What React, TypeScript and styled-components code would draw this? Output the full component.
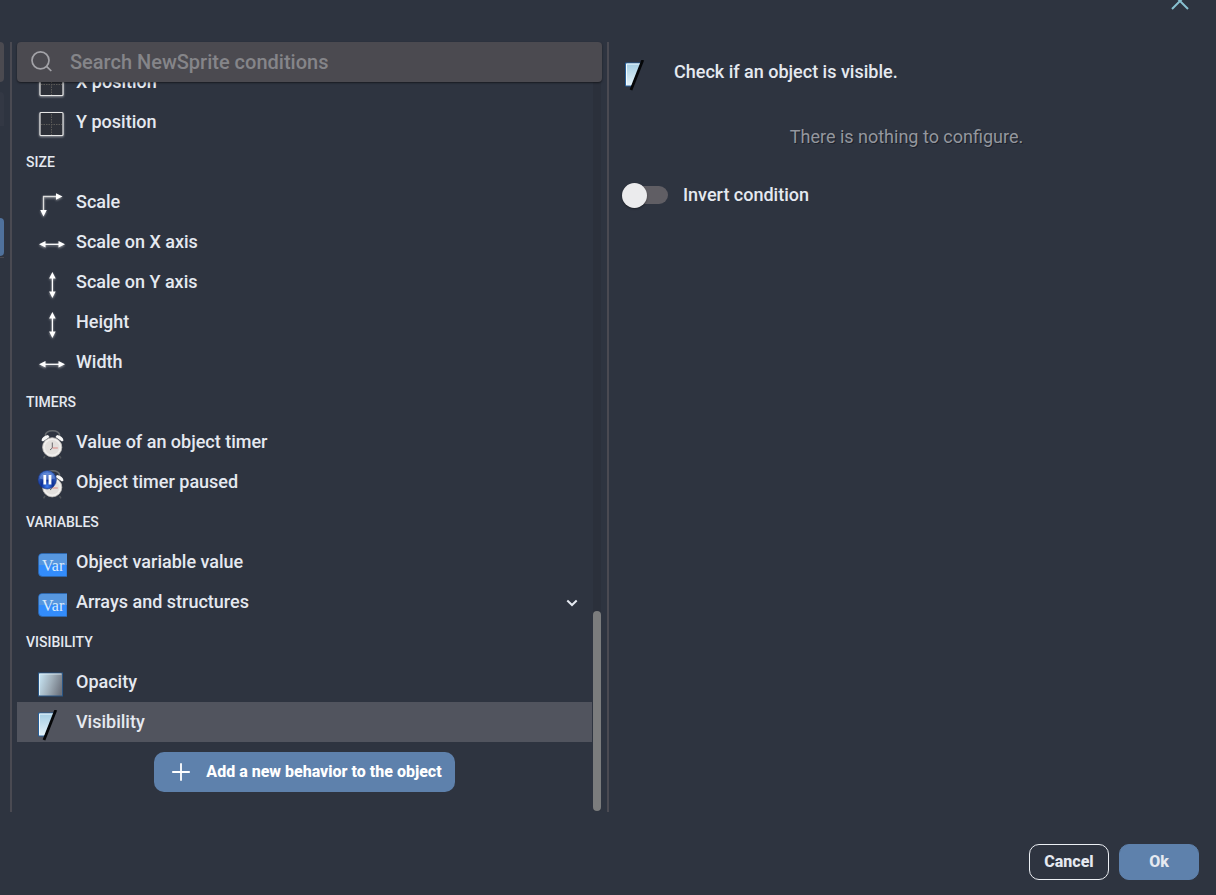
import React, { useState } from 'react';
import styled, { createGlobalStyle } from 'styled-components';

const colors = {
  background: '#2e3440',
  field: '#4b4a50',
  divider: '#4a4a52',
  selected: '#51545e',
  primary: '#5e81ac',
  text: '#e5e9f0',
  muted: '#94979e',
};

const GlobalStyle = createGlobalStyle`
  *, *::before, *::after { box-sizing: border-box; }
  body {
    margin: 0;
    background: ${colors.background};
    color: ${colors.text};
    font-family: Roboto, "Noto Sans", sans-serif;
    font-size: 18px;
    font-weight: 500;
    line-height: 24px;
  }
  button, input { font: inherit; color: inherit; }
  button { cursor: pointer; }
`;

const Dialog = styled.div`
  display: flex;
  flex-direction: column;
  height: 100vh;
  overflow: hidden;
`;

const Header = styled.header`
  display: flex;
  justify-content: flex-end;
  align-items: flex-start;
  flex: none;
  height: 42px;
  padding: 0 24px;
`;

const CloseButton = styled.button`
  display: flex;
  padding: 0;
  border: 0;
  background: none;
  color: #88c0d0;
`;

const Columns = styled.main`
  display: grid;
  grid-template-columns: 10px calc(50% - 11px) 1fr;
  flex: 1;
  min-height: 0;
`;

const ObjectColumn = styled.div`
  display: flex;
  flex-direction: column;
  width: 4px;
`;

const ObjectSearch = styled.div`
  height: 40px;
  border-radius: 0 4px 4px 0;
  background: ${colors.field};
`;

const ObjectGroup = styled.div`
  height: 34px;
  margin: 10px 0 92px;
  border-radius: 0 4px 0 0;
  background: #333844;
`;

const ObjectSelected = styled.div`
  height: 38px;
  border-radius: 0 8px 8px 0;
  background: #4f719c;
`;

const ObjectLine = styled.div`
  height: 2px;
  border-bottom: 1px solid ${colors.divider};
`;

const ListColumn = styled.section`
  display: flex;
  flex-direction: column;
  min-height: 0;
  padding: 0 5px;
  border-left: 2px solid ${colors.divider};
`;

const SearchBar = styled.label`
  display: flex;
  align-items: center;
  gap: 16px;
  flex: none;
  height: 40px;
  padding: 0 12px;
  border-radius: 4px;
  background: ${colors.field};
  box-shadow: 0 1px 2px rgba(0, 0, 0, 0.5);
  color: #a3a3a8;
  z-index: 1;
`;

const SearchInput = styled.input`
  flex: 1;
  min-width: 0;
  padding: 0;
  border: 0;
  outline: 0;
  background: none;
  color: ${colors.text};
  font-size: 20px;
  &::placeholder { color: #858589; opacity: 1; }
`;

const ScrollArea = styled.div`
  display: grid;
  grid-template-columns: 1fr 8px;
  gap: 1px;
  flex: 1;
  min-height: 0;
  padding: 0 1px 1px 0;
`;

const List = styled.div`
  display: flex;
  flex-direction: column;
  justify-content: flex-end;
  overflow: hidden;
  min-height: 0;
`;

const ScrollTrack = styled.div`
  display: flex;
  flex-direction: column;
  justify-content: flex-end;
  background: #2b303b;
`;

const ScrollThumb = styled.div`
  height: 200px;
  border-radius: 4px;
  background: #7b7c7d;
`;

const GroupTitle = styled.h3`
  flex: none;
  height: 40px;
  margin: 0;
  padding: 0 9px;
  font-size: 14px;
  font-weight: 500;
  line-height: 40px;
  text-transform: uppercase;
`;

const Item = styled.button<{ $selected?: boolean }>`
  display: flex;
  flex: none;
  gap: 9px;
  height: 40px;
  padding: 0 12px 0 18px;
  border: 0;
  background: ${(p) => (p.$selected ? colors.selected : 'none')};
  line-height: 40px;
  text-align: left;
`;

const ItemLabel = styled.span`
  flex: 1;
`;

const IconSlot = styled.span`
  display: flex;
  align-items: flex-end;
`;

const ArrowSlot = styled.span`
  display: flex;
  align-items: center;
`;

const AddButton = styled.button`
  display: flex;
  align-items: center;
  align-self: center;
  flex: none;
  gap: 15px;
  height: 40px;
  margin: 10px 0 19px;
  padding: 0 13px 0 17px;
  border: 0;
  border-radius: 10px;
  background: ${colors.primary};
  color: #fff;
  font-size: 16px;
  font-weight: 800;
`;

const Detail = styled.section`
  display: flex;
  flex-direction: column;
  padding: 18px 17px 0 13px;
  border-left: 2px solid ${colors.divider};
`;

const DetailHeader = styled.div`
  display: flex;
  gap: 20px;
`;

const DetailIcon = styled.div`
  display: flex;
  width: 32px;
`;

const DetailText = styled.p`
  margin: 0;
`;

const EmptyText = styled.p`
  margin: 33px 0 0;
  padding-right: 8px;
  color: ${colors.muted};
  font-weight: 400;
  text-align: center;
  text-shadow: 1px 1px 0 #1d212a;
`;

const SwitchLabel = styled.label`
  display: flex;
  align-items: center;
  align-self: flex-start;
  gap: 15px;
  margin-top: 34px;
`;

const Switch = styled.input`
  display: flex;
  align-items: center;
  appearance: none;
  width: 34px;
  height: 18px;
  margin: 0 0 0 12px;
  border-radius: 9px;
  background: #605e64;
  cursor: pointer;
  &::before {
    content: '';
    flex: none;
    width: 25px;
    height: 25px;
    margin-left: -12px;
    border-radius: 50%;
    background: #ebebed;
    box-shadow: 0 1px 2px rgba(0, 0, 0, 0.4);
  }
  &:checked { background: ${colors.primary}; }
  &:checked::before { margin-left: 12px; }
`;

const Footer = styled.footer`
  display: flex;
  justify-content: flex-end;
  flex: none;
  gap: 10px;
  padding: 32px 17px 15px;
`;

const FooterButton = styled.button<{ $primary?: boolean }>`
  width: 80px;
  height: 36px;
  padding: 0;
  border: 1px solid ${(p) => (p.$primary ? colors.primary : '#eceff4')};
  border-radius: 10px;
  background: ${(p) => (p.$primary ? colors.primary : 'none')};
  font-size: 16px;
  font-weight: 800;
`;

type IconName =
  | 'position' | 'scale' | 'horizontal' | 'vertical' | 'clock'
  | 'paused' | 'variable' | 'opacity' | 'visibility';

const Glow = styled.g`
  filter: drop-shadow(0 1px 1px rgba(255, 255, 255, 0.5));
`;

const Clock = () => (
  <>
    <path d="M10.500 6 C9 -1 26 -1 24.500 6" fill="none" stroke="#666a6e" strokeWidth="1.5" />
    <path d="M6.500 10.500 Q7 6 13 5 L14.500 7 L8 11.500Z M28.500 10.500 Q28 6 22 5 L20.500 7 L27 11.500Z" fill="#f6f6f6" />
    <path d="M10 26 L8.500 28.300 M24.500 26 L26 28.300" stroke="#515559" strokeWidth="1.500" />
    <circle cx="17.200" cy="17.300" r="9.600" fill="#f1efed" stroke="#c3c0bc" strokeWidth=".8" />
    <circle cx="17.200" cy="17.300" r="7.300" fill="#e3e0dd" />
    <path d="M17.300 12.500 V18 L15 20" fill="none" stroke="#68666a" strokeWidth="1" />
    <path d="M17.500 18 H22.800" stroke="#dd8580" strokeWidth="1" />
  </>
);

const drawings: Record<IconName, React.ReactNode> = {
  position: (
    <Glow>
      <rect x="5" y="2.500" width="23" height="23" rx="1" fill="#2d3038" stroke="#e6e6e6" strokeWidth="1.200" />
      <path d="M6 14.500 H27 M16.500 4 V25" stroke="#5c5b58" strokeDasharray="1.500 1" />
    </Glow>
  ),
  scale: (
    <Glow>
      <path d="M8.500 22 V6.500 H23" fill="none" stroke="#dcdcdc" strokeWidth="1.300" />
      <path d="M21 3.200 L27.500 6.500 L21 9.800Z M5.200 20 H11.800 L8.500 26.500Z" fill="#fff" />
    </Glow>
  ),
  horizontal: (
    <Glow>
      <path d="M8 14.300 H26" stroke="#fff" strokeWidth="1.300" />
      <path d="M10.500 11 L4 14.300 L10.500 17.600Z M23.500 11 L30 14.300 L23.500 17.600Z" fill="#fff" />
    </Glow>
  ),
  vertical: (
    <Glow>
      <path d="M17.400 6 V24" stroke="#fff" strokeWidth="1.300" />
      <path d="M14.100 8.500 L17.400 2 L20.700 8.500Z M14.100 21.500 H20.700 L17.400 28Z" fill="#fff" />
    </Glow>
  ),
  clock: <Clock />,
  paused: (
    <>
      <Clock />
      <circle cx="12.200" cy="9.800" r="9.200" fill="url(#ball)" stroke="#16317c" strokeWidth=".6" />
      <path d="M4.500 8.500 A8 8 0 0 1 20 8.500 Q12 11 4.500 8.500Z" fill="#9ab9ee" opacity=".4" />
      <path d="M9.800 5 V14.500 M15 5 V14.500" stroke="#fff" strokeWidth="2.800" />
    </>
  ),
  variable: (
    <>
      <path d="M7.500 3.500 H32 V26.500 H7.500 Q3.500 26.500 3.500 22.500 V7.500 Q3.500 3.500 7.500 3.500Z" fill="#338cfb" stroke="#2d68ae" strokeWidth=".8" />
      <path d="M7.500 4 H32 V15 H4 V7.500 Q4 4 7.500 4Z" fill="#5797df" />
      <text x="7" y="21" fontFamily="Liberation Serif, serif" fontSize="16" fontWeight="400" fill="#d9eafd">Var</text>
    </>
  ),
  opacity: (
    <>
      <rect x="3.500" y="3" width="24" height="23" fill="url(#fade)" stroke="#295584" />
      <path d="M4.500 25 V4 H26.500" fill="none" stroke="#e9f6fd" strokeWidth="1" opacity=".8" />
    </>
  ),
  visibility: (
    <>
      <path d="M3.500 3 H20 L10 26 H3.500Z" fill="url(#glass)" stroke="#285f98" />
      <path d="M4.500 25 V4 H18.500" fill="none" stroke="#f2fbff" strokeWidth="1" />
      <path d="M20.800 0 L9 30" stroke="#050608" strokeWidth="2.800" />
    </>
  ),
};

const ItemIcon = ({ name }: { name: IconName }) => (
  <svg width="32" height="32" viewBox="0 0 32 32" aria-hidden="true">
    {drawings[name]}
  </svg>
);

const Gradients = () => (
  <svg width="0" height="0" display="block" aria-hidden="true">
    <defs>
      <radialGradient id="ball" cx=".5" cy=".85" r=".8">
        <stop offset="0" stopColor="#3f7df0" />
        <stop offset=".4" stopColor="#0d2f96" />
        <stop offset="1" stopColor="#4a78cf" />
      </radialGradient>
      <linearGradient id="fade" x1="0" y1=".3" x2="1" y2=".6">
        <stop offset="0" stopColor="#c5e2f1" />
        <stop offset=".5" stopColor="#a0afba" />
        <stop offset="1" stopColor="#6e747f" />
      </linearGradient>
      <linearGradient id="glass" x1="0" y1="0" x2="0" y2="1">
        <stop offset="0" stopColor="#a3cce2" />
        <stop offset="1" stopColor="#e6f4fb" />
      </linearGradient>
    </defs>
  </svg>
);

type Entry = { label: string; icon: IconName; expandable?: boolean };

const groups: { title?: string; items: Entry[] }[] = [
  {
    items: [
      { label: 'X position', icon: 'position' },
      { label: 'Y position', icon: 'position' },
    ],
  },
  {
    title: 'Size',
    items: [
      { label: 'Scale', icon: 'scale' },
      { label: 'Scale on X axis', icon: 'horizontal' },
      { label: 'Scale on Y axis', icon: 'vertical' },
      { label: 'Height', icon: 'vertical' },
      { label: 'Width', icon: 'horizontal' },
    ],
  },
  {
    title: 'Timers',
    items: [
      { label: 'Value of an object timer', icon: 'clock' },
      { label: 'Object timer paused', icon: 'paused' },
    ],
  },
  {
    title: 'Variables',
    items: [
      { label: 'Object variable value', icon: 'variable' },
      { label: 'Arrays and structures', icon: 'variable', expandable: true },
    ],
  },
  {
    title: 'Visibility',
    items: [
      { label: 'Opacity', icon: 'opacity' },
      { label: 'Visibility', icon: 'visibility' },
    ],
  },
];

export default function App() {
  const [selected, setSelected] = useState('Visibility');
  const [inverted, setInverted] = useState(false);

  return (
    <Dialog>
      <GlobalStyle />
      <Gradients />
      <Header>
        <CloseButton type="button" aria-label="Close">
          <svg width="24" height="12" viewBox="0 11 24 12" fill="none" stroke="currentColor" strokeWidth="2">
            <path d="M4 4 L20 20 M20 4 L4 20" />
          </svg>
        </CloseButton>
      </Header>
      <Columns>
        <ObjectColumn>
          <ObjectSearch />
          <ObjectGroup />
          <ObjectSelected />
          <ObjectLine />
        </ObjectColumn>
        <ListColumn>
          <SearchBar>
            <svg width="25" height="25" viewBox="0 0 25 25" fill="none" stroke="currentColor" strokeWidth="1.700" aria-hidden="true">
              <circle cx="11.500" cy="10.300" r="8.500" />
              <path d="M17.500 16.300 L22.300 21" />
            </svg>
            <SearchInput type="text" aria-label="Search conditions" placeholder="Search NewSprite conditions" />
          </SearchBar>
          <ScrollArea>
            <List>
              {groups.map((group) => (
                <React.Fragment key={group.title ?? 'Position'}>
                  {group.title && <GroupTitle>{group.title}</GroupTitle>}
                  {group.items.map((item) => (
                    <Item
                      key={item.label}
                      type="button"
                      $selected={selected === item.label}
                      onClick={() => setSelected(item.label)}
                    >
                      <IconSlot>
                        <ItemIcon name={item.icon} />
                      </IconSlot>
                      <ItemLabel>{item.label}</ItemLabel>
                      {item.expandable && (
                        <ArrowSlot>
                          <svg width="16" height="16" viewBox="0 0 16 16" fill="none" stroke="currentColor" strokeWidth="2" aria-hidden="true">
                            <path d="M3.300 6.500 L8 11 L12.700 6.500" />
                          </svg>
                        </ArrowSlot>
                      )}
                    </Item>
                  ))}
                </React.Fragment>
              ))}
              <AddButton type="button">
                <svg width="20" height="20" viewBox="0 0 20 20" stroke="currentColor" strokeWidth="1.800" aria-hidden="true">
                  <path d="M10 1.200 V18.800 M1.200 10 H18.800" />
                </svg>
                Add a new behavior to the object
              </AddButton>
            </List>
            <ScrollTrack>
              <ScrollThumb />
            </ScrollTrack>
          </ScrollArea>
        </ListColumn>
        <Detail>
          <DetailHeader>
            <DetailIcon>
              <ItemIcon name="visibility" />
            </DetailIcon>
            <DetailText>Check if an object is visible.</DetailText>
          </DetailHeader>
          <EmptyText>There is nothing to configure.</EmptyText>
          <SwitchLabel>
            <Switch
              type="checkbox"
              role="switch"
              checked={inverted}
              onChange={(event) => setInverted(event.target.checked)}
            />
            Invert condition
          </SwitchLabel>
        </Detail>
      </Columns>
      <Footer>
        <FooterButton type="button">Cancel</FooterButton>
        <FooterButton type="button" $primary>Ok</FooterButton>
      </Footer>
    </Dialog>
  );
}
